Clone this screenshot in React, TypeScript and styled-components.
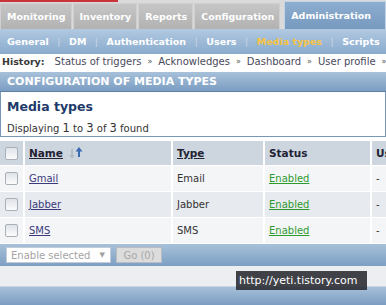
import React from "react";
import styled, { createGlobalStyle } from "styled-components";

const GlobalStyle = createGlobalStyle`
  html, body {
    margin: 0;
    padding: 0;
    overflow: hidden;
    background: #ffffff;
  }
  body {
    font-family: "DejaVu Sans", Verdana, sans-serif;
    font-size: 10px;
    color: #333333;
  }
`;

const Page = styled.div`
  position: relative;
  width: 386px;
  height: 305px;
  overflow: hidden;
  display: flex;
  flex-direction: column;
`;

const MainNav = styled.div`
  display: flex;
  align-items: flex-end;
  gap: 1px;
  height: 29px;
  background: #dadada linear-gradient(#c8343a, #c8343a) no-repeat 0 0 / 118px 2px;
`;

const MainTab = styled.div<{ $active?: boolean }>`
  display: flex;
  align-items: center;
  box-sizing: border-box;
  height: ${(p) => (p.$active ? "28px" : "26px")};
  padding: 0 5px 0 6px;
  margin-left: ${(p) => (p.$active ? "3px" : "0")};
  font-size: 9.5px;
  font-weight: bold;
  color: #ffffff;
  white-space: nowrap;
  background: ${(p) =>
    p.$active
      ? "linear-gradient(#8eaed0, #7699bf)"
      : "linear-gradient(#c6c6c6, #b2b2b2)"};
  border: 1px solid ${(p) => (p.$active ? "#c3d4e6" : "#cfcfcf")};
  border-bottom: none;
  flex: ${(p) => (p.$active ? "1" : "none")};
`;

const SubNav = styled.div`
  display: flex;
  align-items: center;
  height: 25px;
  padding-left: 7px;
  background: linear-gradient(#b2c9e1, #89abcd);
  white-space: nowrap;
  font-size: 9.5px;
  font-weight: bold;
`;

const SubItem = styled.span<{ $current?: boolean }>`
  color: ${(p) => (p.$current ? "#f6c445" : "#ffffff")};
`;

const SubSep = styled.span`
  margin: 0 8.5px;
  color: #c7d7e8;
  font-weight: normal;
`;

const History = styled.div`
  display: flex;
  align-items: center;
  height: 14px;
  padding-left: 2px;
  white-space: nowrap;
  color: #444444;
`;

const HistoryLabel = styled.span`
  font-weight: bold;
  font-size: 9.5px;
  margin-right: 10px;
  color: #3a3a3a;
`;

const Crumb = styled.span`
  color: #4a4a5c;
`;

const CrumbSep = styled.span`
  margin: 0 6px;
  font-size: 8px;
  color: #555555;
`;

const SectionHeader = styled.div`
  display: flex;
  align-items: center;
  margin-top: 4px;
  height: 19px;
  padding-left: 7px;
  background: linear-gradient(#a8c1da, #7b9dc2);
  border-bottom: 1px solid #5d80a7;
  color: #ffffff;
  font-size: 11px;
  font-weight: bold;
  white-space: nowrap;
`;

const ContentBox = styled.div`
  box-sizing: border-box;
  height: 45px;
  padding: 7px 6px 0;
  border: 1px solid #7896b8;
  border-top: none;
`;

const Title = styled.div`
  font-size: 12.5px;
  font-weight: bold;
  color: #1e3a6a;
  line-height: 16px;
`;

const Info = styled.div`
  margin-top: 6px;
  color: #333333;
  white-space: nowrap;
`;

const Num = styled.span`
  font-size: 11.5px;
`;

const Table = styled.table`
  border-collapse: separate;
  border-spacing: 2px 1px;
  margin: 3px 0 0 -2px;
  width: 440px;
  table-layout: fixed;
`;

const HeadCell = styled.th<{ $w?: number }>`
  width: ${(p) => (p.$w ? `${p.$w}px` : "auto")};
  height: 24px;
  padding: 0 4px;
  text-align: left;
  background: #cdd6df;
  font-size: 10.5px;
  font-weight: bold;
  color: #222233;
  white-space: nowrap;
`;

const Row = styled.tr<{ $alt?: boolean }>`
  background: ${(p) => (p.$alt ? "#e7eaee" : "#f3f5f7")};
`;

const Cell = styled.td`
  height: 25px;
  padding: 0 4px;
  white-space: nowrap;
  color: #333333;
`;

const CheckCell = styled.td`
  height: 25px;
  padding: 0;
  text-align: center;
`;

const HeadCheckCell = styled.th`
  width: 23px;
  padding: 0;
  background: #cdd6df;
`;

const Check = styled.span`
  display: inline-block;
  vertical-align: middle;
  box-sizing: border-box;
  width: 13px;
  height: 13px;
  margin-left: -1px;
  border: 1px solid #a9b0b8;
  border-radius: 2px;
  background: linear-gradient(#dfe3e8, #fbfbfc);
`;

const SortLink = styled.span`
  text-decoration: underline;
`;

const SortIcon = styled.svg`
  vertical-align: -2px;
  margin-left: 5px;
`;

const NameLink = styled.span`
  color: #3b3b7c;
  text-decoration: underline;
`;

const StatusLink = styled.span`
  color: #2f9a2f;
  text-decoration: underline;
`;

const FooterBar = styled.div`
  display: flex;
  align-items: center;
  gap: 5px;
  height: 22px;
  padding-left: 6px;
  background: linear-gradient(#a7c0d9, #7d9fc3);
`;

const Select = styled.div`
  display: flex;
  align-items: center;
  box-sizing: border-box;
  width: 105px;
  height: 16px;
  padding-left: 4px;
  background: #ffffff;
  border: 1px solid #c3ccd6;
  color: #a4a4a4;
`;

const SelectArrow = styled.span`
  margin-left: auto;
  margin-right: 5px;
  font-size: 7px;
  color: #a0a0a0;
`;

const GoButton = styled.div`
  display: flex;
  align-items: center;
  justify-content: center;
  box-sizing: border-box;
  width: 46px;
  height: 16px;
  background: #dcdcdc;
  border: 1px solid #b8bcc2;
  color: #a8a8a8;
`;

const Spacer = styled.div`
  height: 20px;
  background: #eceef1;
`;

const BottomBar = styled.div`
  flex: 1;
  background: linear-gradient(#a7c0d9, #7b9dc2);
  border-top: 1px solid #c8d6e4;
`;

const Watermark = styled.div`
  position: absolute;
  left: 236px;
  top: 271px;
  width: 131px;
  height: 19px;
  box-sizing: border-box;
  padding-left: 3px;
  display: flex;
  align-items: center;
  background: rgba(40, 42, 48, 0.88);
  color: #ffffff;
  font-size: 11px;
  white-space: nowrap;
`;

const mainTabs = ["Monitoring", "Inventory", "Reports", "Configuration", "Administration"];
const subItems = ["General", "DM", "Authentication", "Users", "Media types", "Scripts"];
const crumbs = ["Status of triggers", "Acknowledges", "Dashboard", "User profile"];

const mediaTypes = [
  { name: "Gmail", type: "Email" },
  { name: "Jabber", type: "Jabber" },
  { name: "SMS", type: "SMS" },
];

const App = () => {
  return (
    <>
      <GlobalStyle />
      <Page>
        <MainNav>
          {mainTabs.map((t) => (
            <MainTab key={t} $active={t === "Administration"}>
              {t}
            </MainTab>
          ))}
        </MainNav>
        <SubNav>
          {subItems.map((s, i) => (
            <React.Fragment key={s}>
              {i > 0 && <SubSep>|</SubSep>}
              <SubItem $current={s === "Media types"}>{s}</SubItem>
            </React.Fragment>
          ))}
        </SubNav>
        <History>
          <HistoryLabel>History:</HistoryLabel>
          {crumbs.map((c) => (
            <React.Fragment key={c}>
              <Crumb>{c}</Crumb>
              <CrumbSep>»</CrumbSep>
            </React.Fragment>
          ))}
        </History>
        <SectionHeader>CONFIGURATION OF MEDIA TYPES</SectionHeader>
        <ContentBox>
          <Title>Media types</Title>
          <Info>
            Displaying <Num>1</Num> to <Num>3</Num> of <Num>3</Num> found
          </Info>
        </ContentBox>
        <Table>
          <thead>
            <tr>
              <HeadCheckCell>
                <Check />
              </HeadCheckCell>
              <HeadCell $w={138}>
                <SortLink>Name</SortLink>
                <SortIcon width="15" height="12" viewBox="0 0 15 12">
                  <path d="M3 2h2v6h2l-3 4-3-4h2z" fill="#b4bcc4" />
                  <path d="M11 0l3.5 4.5H12V10h-2V4.5H7.5z" fill="#3b6ab0" />
                </SortIcon>
              </HeadCell>
              <HeadCell $w={82}>
                <SortLink>Type</SortLink>
              </HeadCell>
              <HeadCell $w={97}>Status</HeadCell>
              <HeadCell>Used in actions</HeadCell>
            </tr>
          </thead>
          <tbody>
            {mediaTypes.map((m, i) => (
              <Row key={m.name} $alt={i % 2 === 1}>
                <CheckCell>
                  <Check />
                </CheckCell>
                <Cell>
                  <NameLink>{m.name}</NameLink>
                </Cell>
                <Cell>{m.type}</Cell>
                <Cell>
                  <StatusLink>Enabled</StatusLink>
                </Cell>
                <Cell>-</Cell>
              </Row>
            ))}
          </tbody>
        </Table>
        <FooterBar>
          <Select>
            Enable selected
            <SelectArrow>▼</SelectArrow>
          </Select>
          <GoButton>Go (0)</GoButton>
        </FooterBar>
        <Spacer />
        <BottomBar />
        <Watermark>http://yeti.tistory.com</Watermark>
      </Page>
    </>
  );
};

export default App;
